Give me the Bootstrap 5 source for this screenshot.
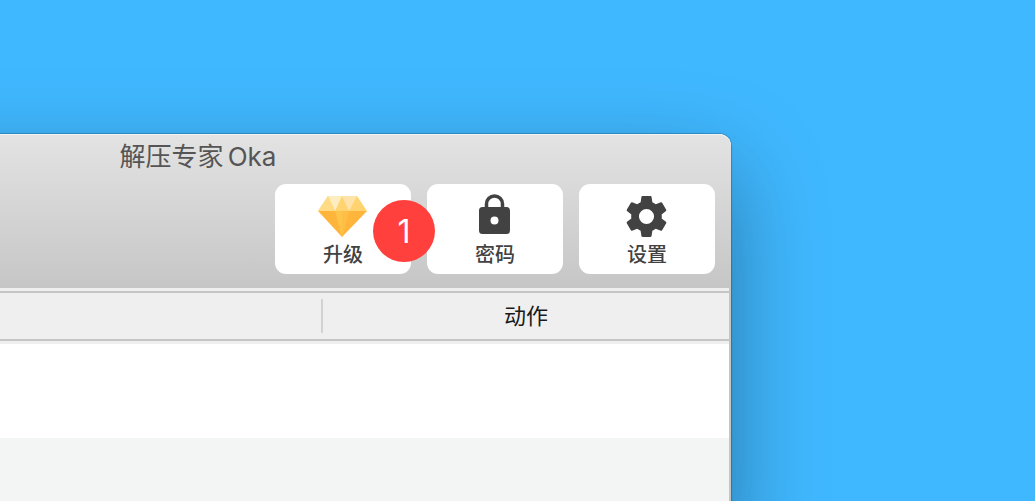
<!DOCTYPE html>
<html lang="zh-CN">
<head>
<meta charset="utf-8">
<meta name="viewport" content="width=device-width, initial-scale=1">
<title>解压专家Oka</title>
<link href="https://cdn.jsdelivr.net/npm/bootstrap@5.3.0/dist/css/bootstrap.min.css" rel="stylesheet">
<style>
  body { background: #40b8ff; font-family: Inter, "Noto Sans CJK SC", sans-serif; }
  /* The window runs off the left and bottom edges of the desktop */
  .desktop { padding-top: 134px; padding-right: 304px; }
  .app-window {
    margin-left: -335px;
    border-radius: 12px 12px 0 0;
    background: #fff;
    box-shadow: 0 0 1px 1px rgba(0, 0, 0, .2), 0 36px 92px rgba(0, 0, 0, .36);
  }
  .toolbar {
    height: 154px;
    padding: 0 16px 14px;
    border-radius: 12px 12px 0 0;
    background: linear-gradient(#e3e3e3, #c6c6c6);
    box-shadow: inset 0 1px #f2f2f2;
  }
  .window-title { font-size: 26px; line-height: 46px; color: #555; }
  .window-title span { margin-left: 4px; }
  .tool {
    width: 136px;
    height: 90px;
    border-radius: 11px;
    background: #fff;
    color: #424242;
    font-size: 20px;
    line-height: 26px;
    font-weight: 500;
  }
  .tool svg { height: 50px; display: block; }
  .step-marker {
    right: -24px;
    top: 16px;
    width: 62px;
    height: 62px;
    background: #ff403d;
    color: #fff;
    font-size: 32px;
    line-height: 64px;
    z-index: 2;
  }
  .file-area { border-right: 2px solid #c5c5c5; background: #efefef; padding-top: 3px; flex: 1; }
  .file-table { --bs-table-bg: transparent; table-layout: fixed; border-collapse: separate; border-spacing: 0; }
  .file-table th {
    height: 50px;
    padding: 6px 0;
    border-top: 2px solid #c5c5c5;
    border-bottom: 2px solid #c5c5c5;
    font-size: 22px;
    line-height: 34px;
    font-weight: 400;
    color: #1a1a1a;
  }
  .file-table th:last-child { width: 408px; }
  .file-table th:last-child div { border-left: 2px solid #d2d2d2; }
  .file-table td { height: 94px; border: 0; background: #fff; }
  .file-table tr:nth-child(even) td { background: #f3f5f5; }
  .file-table .header-gap td { height: 3px; padding: 0; background: #efefef; }
</style>
</head>
<body>
<main class="desktop vh-100 overflow-hidden d-flex flex-column">
  <section class="app-window flex-fill d-flex flex-column">
    <header class="toolbar d-flex flex-column justify-content-between">
      <h1 class="window-title text-center fw-normal m-0">解压专家<span>Oka</span></h1>
      <nav class="d-flex justify-content-end gap-3" aria-label="工具栏">
        <div class="position-relative">
          <button type="button" class="tool border-0 p-0 pt-2 d-flex flex-column align-items-center">
            <svg width="50" viewBox="1 0 50 50" aria-hidden="true">
              <path fill="#ffd36f" d="M11 4h29l10 15H1z"/>
              <path fill="#ffedc2" d="M11 4h14l-7 15z"/>
              <path fill="#ffe3a8" d="M25 4h15l-8 15z"/>
              <path fill="#ffdb85" d="M11 4 18 19H1z"/>
              <path fill="#ffb53c" d="M1 19h49L25 45z"/>
              <path fill="#ffc44b" d="M18 19h14l-7 26z"/>
              <path fill="#ffbe45" d="M25 19h7l-7 26z"/>
            </svg>
            <span>升级</span>
          </button>
          <span class="step-marker position-absolute rounded-circle text-center">1</span>
        </div>
        <button type="button" class="tool border-0 p-0 pt-2 d-flex flex-column align-items-center">
          <svg width="50" viewBox="0 0 50 50" aria-hidden="true">
            <path fill="none" stroke="#424242" stroke-width="3.500" d="M16.500 18v-6a8 8 0 0 1 16 0v6"/>
            <path fill="#424242" fill-rule="evenodd" d="M12.500 15h24a3.500 3.500 0 0 1 3.500 3.500v20a3.500 3.500 0 0 1-3.500 3.500h-24A3.500 3.500 0 0 1 9 38.500v-20a3.500 3.500 0 0 1 3.500-3.500zm12 9.500a4 4 0 1 0 0 8 4 4 0 0 0 0-8z"/>
          </svg>
          <span>密码</span>
        </button>
        <button type="button" class="tool border-0 p-0 pt-2 d-flex flex-column align-items-center">
          <svg width="50" viewBox="0 0 24.500 24.500" aria-hidden="true">
            <path fill="#424242" d="M19.430 12.980c.04-.32.07-.64.07-.98s-.03-.66-.07-.98l2.110-1.650c.19-.15.24-.42.12-.64l-2-3.460c-.12-.22-.39-.3-.61-.22l-2.490 1c-.52-.4-1.080-.73-1.690-.98l-.38-2.650C14.460 2.180 14.250 2 14 2h-4c-.25 0-.46.18-.49.42l-.38 2.650c-.61.25-1.170.59-1.690.98l-2.490-1c-.23-.09-.49 0-.61.22l-2 3.460c-.13.22-.07.49.12.64l2.110 1.650c-.04.32-.07.65-.07.98s.03.66.07.98l-2.110 1.650c-.19.15-.24.42-.12.64l2 3.460c.12.22.39.3.61.22l2.490-1c.52.4 1.080.73 1.690.98l.38 2.650c.03.24.24.42.49.42h4c.25 0 .46-.18.49-.42l.38-2.650c.61-.25 1.170-.59 1.690-.98l2.490 1c.23.09.49 0 .61-.22l2-3.460c.12-.22.07-.49-.12-.64zM12 15.700a3.700 3.700 0 1 1 0-7.400 3.700 3.700 0 0 1 0 7.400z"/>
          </svg>
          <span>设置</span>
        </button>
      </nav>
    </header>
    <div class="file-area">
      <table class="table file-table mb-0 text-center">
        <thead>
          <tr><th scope="col"></th><th scope="col"><div>动作</div></th></tr>
        </thead>
        <tbody><tr class="header-gap"><td colspan="2"></td></tr></tbody>
        <tbody>
          <tr><td></td><td></td></tr>
          <tr><td></td><td></td></tr>
        </tbody>
      </table>
    </div>
  </section>
</main>
<script src="https://cdn.jsdelivr.net/npm/bootstrap@5.3.0/dist/js/bootstrap.bundle.min.js"></script>
</body>
</html>
